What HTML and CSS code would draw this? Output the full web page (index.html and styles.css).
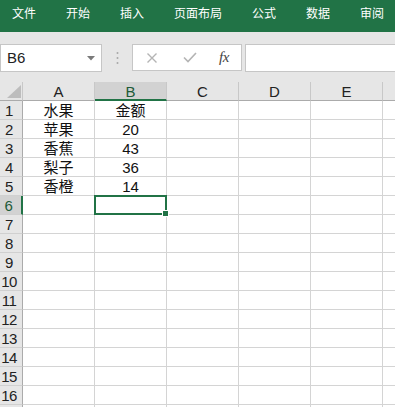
FILE: index.html
```html
<!DOCTYPE html>
<html lang="zh">
<head>
<meta charset="utf-8">
<title>Excel</title>
<link rel="stylesheet" href="styles.css">
</head>
<body>
<div class="ribbon">
  <span class="tab">文件</span>
  <span class="tab">开始</span>
  <span class="tab">插入</span>
  <span class="tab">页面布局</span>
  <span class="tab">公式</span>
  <span class="tab">数据</span>
  <span class="tab">审阅</span>
</div>
<div class="toolbar">
  <div class="namebox">
    <span class="name">B6</span>
    <svg class="caret" width="8" height="5" viewBox="0 0 8 5"><path d="M0 0H8L4 4.5Z" fill="#7a7a7a"/></svg>
  </div>
  <div class="dots">
    <svg width="3" height="14" viewBox="0 0 3 14"><circle cx="1.5" cy="2" r="1" fill="#a8a8a8"/><circle cx="1.5" cy="7" r="1" fill="#a8a8a8"/><circle cx="1.5" cy="12" r="1" fill="#a8a8a8"/></svg>
  </div>
  <div class="fxbox">
    <svg class="ico" width="12" height="12" viewBox="0 0 12 12"><path d="M1.5 1.5L10.5 10.5M10.5 1.5L1.5 10.5" stroke="#b4b4b4" stroke-width="1.4" fill="none"/></svg>
    <svg class="ico" width="14" height="11" viewBox="0 0 14 11"><path d="M1 5.5L5 9.5L13 1" stroke="#b4b4b4" stroke-width="1.6" fill="none"/></svg>
    <span class="fx">fx</span>
  </div>
  <div class="formula"></div>
</div>
<div class="sheet">
  <div class="corner"><svg width="14" height="13" viewBox="0 0 14 13"><path d="M14 0V13H0Z" fill="#bdbdbd"/></svg></div>
  <div class="ch">A</div><div class="ch selh">B</div><div class="ch">C</div><div class="ch">D</div><div class="ch">E</div><div class="ch"></div>

  <div class="rh">1</div><div class="c">水果</div><div class="c">金额</div><div class="c"></div><div class="c"></div><div class="c"></div><div class="c"></div>
  <div class="rh">2</div><div class="c">苹果</div><div class="c">20</div><div class="c"></div><div class="c"></div><div class="c"></div><div class="c"></div>
  <div class="rh">3</div><div class="c">香蕉</div><div class="c">43</div><div class="c"></div><div class="c"></div><div class="c"></div><div class="c"></div>
  <div class="rh">4</div><div class="c">梨子</div><div class="c">36</div><div class="c"></div><div class="c"></div><div class="c"></div><div class="c"></div>
  <div class="rh">5</div><div class="c">香橙</div><div class="c">14</div><div class="c"></div><div class="c"></div><div class="c"></div><div class="c"></div>
  <div class="rh selr">6</div><div class="c"></div><div class="c active"></div><div class="c"></div><div class="c"></div><div class="c"></div><div class="c"></div>
  <div class="rh">7</div><div class="c"></div><div class="c"></div><div class="c"></div><div class="c"></div><div class="c"></div><div class="c"></div>
  <div class="rh">8</div><div class="c"></div><div class="c"></div><div class="c"></div><div class="c"></div><div class="c"></div><div class="c"></div>
  <div class="rh">9</div><div class="c"></div><div class="c"></div><div class="c"></div><div class="c"></div><div class="c"></div><div class="c"></div>
  <div class="rh">10</div><div class="c"></div><div class="c"></div><div class="c"></div><div class="c"></div><div class="c"></div><div class="c"></div>
  <div class="rh">11</div><div class="c"></div><div class="c"></div><div class="c"></div><div class="c"></div><div class="c"></div><div class="c"></div>
  <div class="rh">12</div><div class="c"></div><div class="c"></div><div class="c"></div><div class="c"></div><div class="c"></div><div class="c"></div>
  <div class="rh">13</div><div class="c"></div><div class="c"></div><div class="c"></div><div class="c"></div><div class="c"></div><div class="c"></div>
  <div class="rh">14</div><div class="c"></div><div class="c"></div><div class="c"></div><div class="c"></div><div class="c"></div><div class="c"></div>
  <div class="rh">15</div><div class="c"></div><div class="c"></div><div class="c"></div><div class="c"></div><div class="c"></div><div class="c"></div>
  <div class="rh">16</div><div class="c"></div><div class="c"></div><div class="c"></div><div class="c"></div><div class="c"></div><div class="c"></div>
  <div class="rh"></div><div class="c"></div><div class="c"></div><div class="c"></div><div class="c"></div><div class="c"></div><div class="c"></div>
</div>
</body>
</html>
```
FILE: styles.css
```css
* { box-sizing: border-box; }
html, body {
  margin: 0;
  padding: 0;
  width: 395px;
  height: 407px;
  overflow: hidden;
  background: #ffffff;
  font-family: "Liberation Sans", "Noto Sans CJK SC", sans-serif;
}
.ribbon {
  height: 32px;
  background: #217346;
  display: flex;
  gap: 30px;
  padding: 4px 0 0 12px;
}
.tab {
  color: #ffffff;
  font-family: "Noto Sans CJK SC", sans-serif;
  font-size: 12px;
  line-height: 17px;
}
.toolbar {
  height: 50px;
  background: #e6e6e6;
  display: flex;
  align-items: flex-start;
  padding-top: 12px;
}
.namebox {
  width: 102px;
  height: 28px;
  background: #ffffff;
  border: 1px solid #c6c6c6;
  display: flex;
  align-items: center;
  justify-content: space-between;
  padding: 0 6px 0 6px;
}
.name {
  font-size: 15px;
  color: #222;
  line-height: 18px;
}
.caret { margin-top: 1px; }
.dots {
  width: 30px;
  height: 28px;
  display: flex;
  align-items: center;
  justify-content: center;
}
.fxbox {
  width: 110px;
  height: 27px;
  background: #ffffff;
  border: 1px solid #c6c6c6;
  display: flex;
  align-items: center;
  padding-left: 13px;
}
.fxbox .ico:first-child { margin-right: 25px; }
.fxbox .ico:nth-child(2) { margin-right: 22px; }
.fx {
  font-family: "Liberation Serif", serif;
  font-style: italic;
  font-size: 15px;
  color: #444;
  letter-spacing: -0.5px;
}
.formula {
  flex: 1;
  margin-left: 3px;
  height: 28px;
  background: #ffffff;
  border: 1px solid #c6c6c6;
  border-right: none;
}
.sheet {
  display: grid;
  grid-template-columns: 23px repeat(6, 72px);
  grid-auto-rows: 19px;
}
.corner {
  background: #e6e6e6;
  border-right: 1px solid #c8c8c8;
  border-bottom: 1px solid #ababab;
  display: flex;
  justify-content: flex-end;
  align-items: flex-end;
  padding: 0 1px 2px 0;
}
.ch {
  background: #e6e6e6;
  border-right: 1px solid #c8c8c8;
  border-bottom: 1px solid #ababab;
  text-align: center;
  font-size: 15px;
  line-height: 19px;
  color: #222;
}
.ch.selh {
  background: #d2d2d2;
  border-bottom: 2px solid #217346;
  color: #1d5b38;
}
.rh {
  background: #e6e6e6;
  border-right: 1px solid #ababab;
  border-bottom: 1px solid #d0d0d0;
  font-size: 15px;
  line-height: 20px;
  color: #222;
  text-align: center;
  padding-right: 4px;
  letter-spacing: -0.5px;
}
.rh.selr {
  background: #d2d2d2;
  border-right: 2px solid #217346;
  color: #1d5b38;
}
.c {
  border-right: 1px solid #d4d4d4;
  border-bottom: 1px solid #d4d4d4;
  text-align: center;
  font-size: 15px;
  line-height: 20px;
  color: #111;
}
.c.active { position: relative; }
.c.active::after {
  content: "";
  position: absolute;
  left: -1px;
  top: -1px;
  right: -1px;
  bottom: -1px;
  border: 2px solid #217346;
}
.c.active::before {
  content: "";
  position: absolute;
  right: -3px;
  bottom: -3px;
  width: 5px;
  height: 5px;
  background: #217346;
  border: 1px solid #ffffff;
  box-sizing: content-box;
  z-index: 2;
}
```
